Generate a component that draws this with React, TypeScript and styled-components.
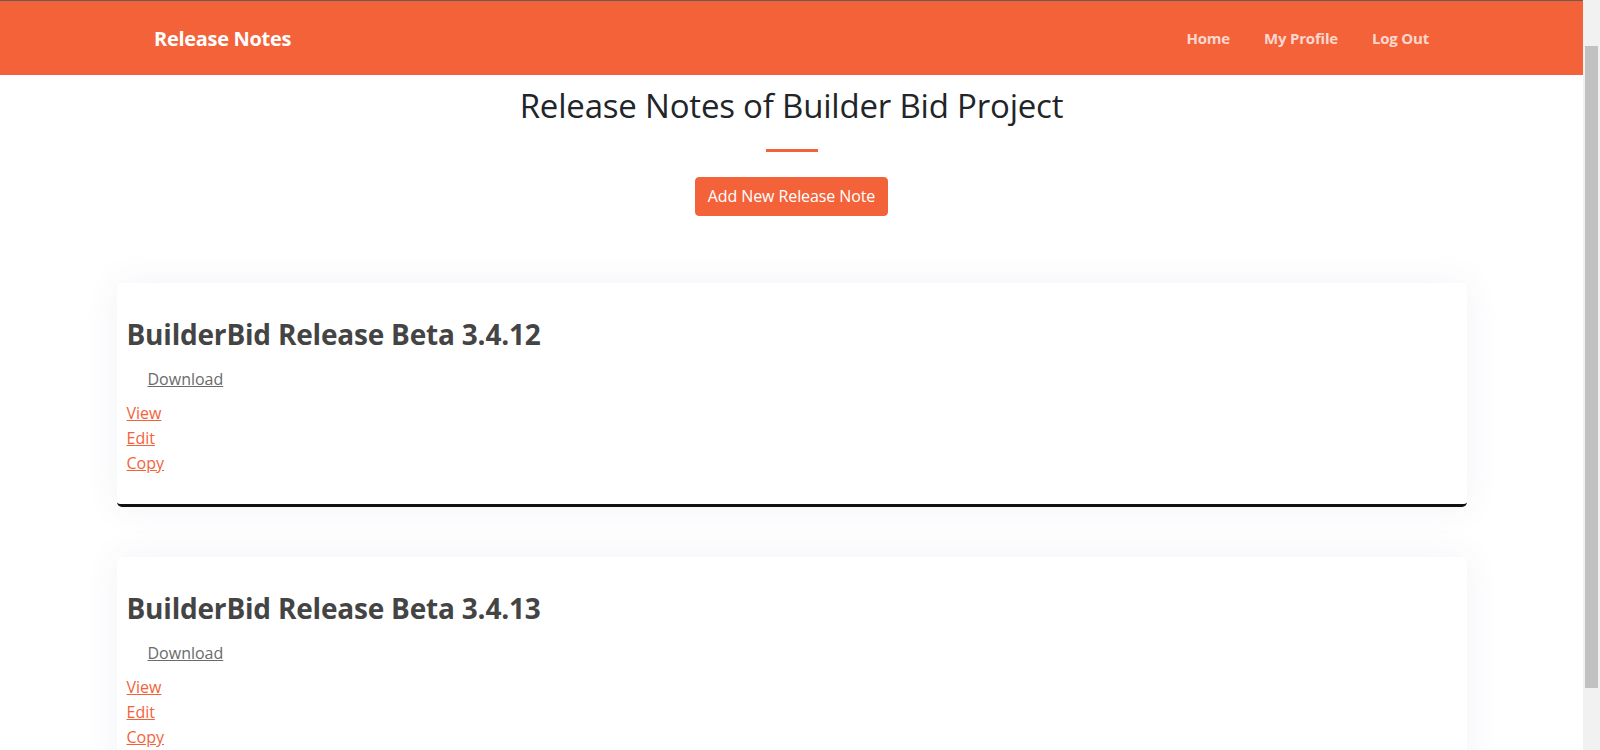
import styled, { createGlobalStyle } from "styled-components";

const GlobalStyle = createGlobalStyle`
  body {
    margin: 0;
    overflow: hidden;
    background-color: #ffffff;
    font-family: "Open Sans", "Noto Sans", "Liberation Sans", sans-serif;
    color: #212529;
  }
`;

const primary = "#f4623a";

const Page = styled.div`
  height: 100vh;
  overflow-y: auto;
  padding-right: 17px;
  background:
    linear-gradient(#c1c1c1, #c1c1c1) right 2px top 46px / 13px 642px no-repeat,
    linear-gradient(#f1f1f1, #f1f1f1) right top / 17px 100% no-repeat,
    #ffffff;
`;

const Nav = styled.nav`
  height: 75px;
  border-top: 1px solid #6e5a54;
  box-sizing: border-box;
  background-color: ${primary};
`;

const NavInner = styled.div`
  max-width: 1275px;
  height: 100%;
  margin: 0 auto;
  display: flex;
  justify-content: space-between;
  align-items: center;
`;

const Brand = styled.a`
  color: #ffffff;
  font-size: 20px;
  font-weight: 700;
  letter-spacing: -0.3px;
  text-decoration: none;
`;

const NavList = styled.ul`
  margin: 0;
  padding: 0;
  display: flex;
  gap: 34px;
  list-style: none;

  a {
    color: rgba(255, 255, 255, 0.75);
    font-size: 15px;
    font-weight: 700;
    letter-spacing: -0.2px;
    text-decoration: none;
  }
`;

const Main = styled.main`
  padding-top: 11px;
  padding-bottom: 60px;
  display: flex;
  flex-direction: column;
  align-items: center;
`;

const Title = styled.h1`
  margin: 0;
  font-size: 33px;
  font-weight: 500;
  line-height: 1.2;
  letter-spacing: -0.2px;
  color: #212529;
`;

const Divider = styled.hr`
  width: 52px;
  height: 3px;
  margin: 23px auto 25px;
  border: 0;
  background-color: ${primary};
`;

const AddButton = styled.button`
  padding: 6px 12px;
  border: 1px solid ${primary};
  border-radius: 4px;
  background-color: ${primary};
  color: #ffffff;
  font-family: inherit;
  font-size: 16px;
  line-height: 25px;
  letter-spacing: -0.1px;
  cursor: pointer;
`;

const NoteList = styled.div`
  width: 1350px;
  margin-top: 67px;
  display: flex;
  flex-direction: column;
  gap: 50px;
`;

const Card = styled.article`
  padding: 33px 10px 28px;
  border-radius: 5px;
  border-bottom: 3px solid #111111;
  background-color: #ffffff;
  box-shadow: 0 0 36px rgba(60, 70, 140, 0.07);
`;

const CardTitle = styled.h2`
  margin: 0 0 15px;
  font-size: 28px;
  font-weight: 700;
  line-height: 1.3;
  letter-spacing: -0.2px;
  color: #444444;
`;

const DownloadLink = styled.a`
  display: inline-block;
  margin-left: 21px;
  margin-bottom: 10px;
  font-size: 16px;
  line-height: 24px;
  color: #6b6b6b;
  text-decoration: underline;
`;

const Actions = styled.div`
  display: flex;
  flex-direction: column;
  align-items: flex-start;

  a {
    font-size: 16px;
    line-height: 25px;
    color: ${primary};
    text-decoration: underline;
  }
`;

const notes = [
  "BuilderBid Release Beta 3.4.12",
  "BuilderBid Release Beta 3.4.13",
  "BuilderBid Release Beta 3.4.14",
];

const App = () => {
  return (
    <Page>
      <GlobalStyle />
      <Nav>
        <NavInner>
          <Brand href="#">Release Notes</Brand>
          <NavList>
            <li>
              <a href="#">Home</a>
            </li>
            <li>
              <a href="#">My Profile</a>
            </li>
            <li>
              <a href="#">Log Out</a>
            </li>
          </NavList>
        </NavInner>
      </Nav>
      <Main>
        <Title>Release Notes of Builder Bid Project</Title>
        <Divider />
        <AddButton>Add New Release Note</AddButton>
        <NoteList>
          {notes.map((name) => (
            <Card key={name}>
              <CardTitle>{name}</CardTitle>
              <DownloadLink href="#">Download</DownloadLink>
              <Actions>
                <a href="#">View</a>
                <a href="#">Edit</a>
                <a href="#">Copy</a>
              </Actions>
            </Card>
          ))}
        </NoteList>
      </Main>
    </Page>
  );
};

export default App;
